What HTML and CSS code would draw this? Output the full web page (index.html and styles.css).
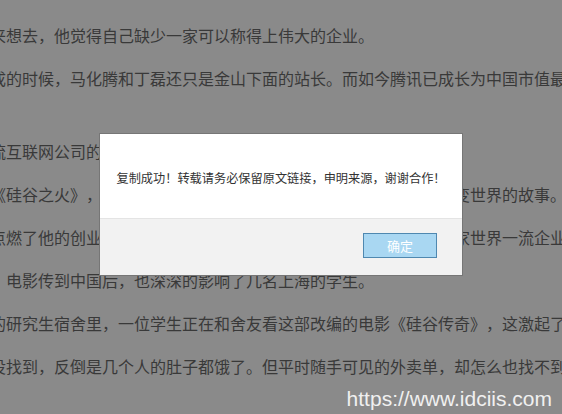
FILE: index.html
```html
<!DOCTYPE html>
<html lang="zh-CN">
<head>
<meta charset="utf-8">
<title>复制成功</title>
<link rel="stylesheet" href="styles.css">
</head>
<body>
<main class="article">
  <p class="line">来想去，他觉得自己缺少一家可以称得上伟大的企业。</p>
  <p class="line">成的时候，马化腾和丁磊还只是金山下面的站长。而如今腾讯已成长为中国市值最高的互联网公司之一。</p>
  <p class="line gap">流互联网公司的梦想从何而来？</p>
  <p class="line">《硅谷之火》，讲述了乔布斯和沃兹尼亚克等人如何用个人电脑改变世界的故事。</p>
  <p class="line">点燃了他的创业梦想，他暗暗发誓，将来一定也要在中国打造出一家世界一流企业。</p>
  <p class="line">，电影传到中国后，也深深的影响了几名上海的学生。</p>
  <p class="line">的研究生宿舍里，一位学生正在和舍友看这部改编的电影《硅谷传奇》，这激起了他们的兴趣。</p>
  <p class="line">没找到，反倒是几个人的肚子都饿了。但平时随手可见的外卖单，却怎么也找不到了。</p>
</main>

<div class="dialog" role="dialog">
  <div class="dialog-body">复制成功！转载请务必保留原文链接，申明来源，谢谢合作！</div>
  <div class="dialog-footer">
    <button class="btn-ok" type="button">确定</button>
  </div>
</div>

<div class="watermark">https://www.idciis.com</div>
</body>
</html>
```

FILE: styles.css
```css
html, body {
  margin: 0;
  padding: 0;
}

body {
  width: 562px;
  height: 414px;
  overflow: hidden;
  position: relative;
  background: #8a8a8a;
  font-family: "Noto Sans CJK SC", "Microsoft YaHei", sans-serif;
  text-spacing-trim: space-all;
}

.article {
  margin-left: -10px;
  padding-top: 14px;
  font-size: 16px;
  line-height: 43px;
  color: #393939;
  white-space: nowrap;
}

.line {
  margin: 0;
}

.gap {
  margin-top: 30px;
}

.dialog {
  position: absolute;
  left: 99px;
  top: 133px;
  width: 364px;
  box-sizing: border-box;
  border: 1px solid #767676;
  background: #ffffff;
  display: flex;
  flex-direction: column;
}

.dialog-body {
  padding: 34px 10px 30px;
  font-size: 12.2px;
  line-height: 20px;
  color: #333333;
  text-align: center;
  white-space: nowrap;
}

.dialog-footer {
  border-top: 1px solid #e4e4e4;
  background: #f2f2f2;
  padding: 14px 25px 17px;
  display: flex;
  justify-content: flex-end;
}

.btn-ok {
  width: 74px;
  height: 25px;
  box-sizing: border-box;
  border: 1px solid #4f88b0;
  background: #a9d7f2;
  color: #ffffff;
  font-family: "Noto Sans CJK SC", sans-serif;
  font-size: 13px;
  padding: 0;
}

.watermark {
  position: absolute;
  right: 10px;
  top: 386px;
  font-family: "Liberation Sans", Arial, sans-serif;
  font-size: 21px;
  line-height: 26px;
  color: #f0f0f0;
}
```
